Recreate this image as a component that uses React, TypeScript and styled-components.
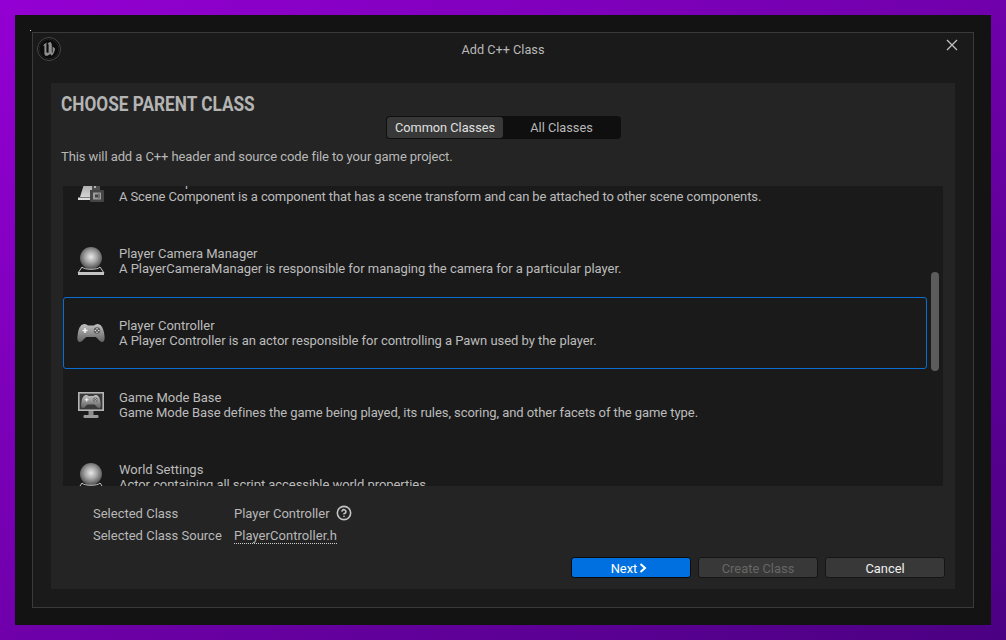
import styled, { createGlobalStyle } from 'styled-components';
import { CircleHelp } from 'lucide-react';

const GlobalStyle = createGlobalStyle`
  html, body {
    margin: 0;
    padding: 0;
    background: #4b0082;
  }
  * {
    box-sizing: border-box;
  }
`;

const Screen = styled.div`
  width: 1006px;
  height: 640px;
  padding: 15px;
  overflow: hidden;
  background: linear-gradient(148deg, #9400d3 0%, #4b0082 100%);
  font-family: Roboto, "Liberation Sans", sans-serif;
  font-size: 13px;
  line-height: 15px;
  color: #c0c0c0;
`;

const Frame = styled.div`
  position: relative;
  width: 976px;
  height: 610px;
  padding: 17px;
  background: #131313;

  &::before {
    content: '';
    position: absolute;
    left: 15px;
    top: 15px;
    width: 1px;
    height: 1px;
    background: #d8d8d8;
  }
`;

const Window = styled.div`
  display: flex;
  flex-direction: column;
  width: 942px;
  height: 576px;
  border: 1px solid #3a3a3a;
  background: #1a1a1a;
`;

const TitleBar = styled.div`
  display: grid;
  grid-template-columns: 1fr auto 1fr;
  align-items: start;
  height: 50px;
  padding: 4px 4px 0;
  flex-shrink: 0;
`;

const TitleText = styled.div`
  margin-top: 5px;
  line-height: 15px;
  font-size: 12.7px;
  color: #b8b8b8;
`;

const CloseButton = styled.div`
  justify-self: end;
  display: flex;
  margin: 2px 11px 0 0;
  color: #c0c0c0;
`;

const Panel = styled.div`
  display: flex;
  flex-direction: column;
  margin: 0 18px;
  height: 506px;
  padding: 0 10px;
  background: #242424;
`;

const Heading = styled.h1`
  margin: 10px 0 0;
  height: 22px;
  font-size: 20.5px;
  line-height: 22px;
  font-weight: 700;
  color: #b4b4b4;
  white-space: nowrap;
  transform: scaleX(0.84);
  transform-origin: left center;
`;

const Tabs = styled.div`
  display: flex;
  align-self: center;
  width: 235px;
  height: 23px;
  margin: 1px 0 0 1px;
  padding: 1px;
  border-radius: 4px;
  background: #0f0f0f;
  font-size: 12.75px;
`;

const Tab = styled.div<{ $active?: boolean }>`
  display: flex;
  align-items: center;
  justify-content: center;
  flex: 0 0 ${(p) => (p.$active ? '116px' : '117px')};
  border-radius: 3px;
  background: ${(p) => (p.$active ? '#383838' : 'transparent')};
  color: ${(p) => (p.$active ? '#e0e0e0' : '#b8b8b8')};
`;

const Description = styled.div`
  margin-top: 10px;
  height: 16px;
  line-height: 16px;
  letter-spacing: -0.085px;
  white-space: nowrap;
  color: #b8b8b8;
`;

const ListBox = styled.div`
  position: relative;
  height: 300px;
  margin: 21px 2px 0;
  overflow: hidden;
  background: #1a1a1a;
`;

const Rows = styled.div`
  margin-top: -33px;
`;

const Row = styled.div<{ $selected?: boolean }>`
  display: flex;
  align-items: center;
  width: 864px;
  height: 72px;
  padding-left: 13px;
  border: 1px solid ${(p) => (p.$selected ? '#0a6ed1' : 'transparent')};
  border-radius: 3px;
`;

const RowIcon = styled.div`
  flex: 0 0 28px;
  height: 32px;
  margin-right: 14px;
`;

const RowText = styled.div`
  white-space: nowrap;
  color: #bcbcbc;
`;

const RowName = styled.div`
  line-height: 15px;
`;

const RowDesc = styled.div<{ $tracking: number }>`
  line-height: 15px;
  letter-spacing: ${(p) => p.$tracking}px;
`;

const ScrollThumb = styled.div`
  position: absolute;
  left: 868px;
  top: 86px;
  width: 8px;
  height: 99px;
  border-radius: 4px;
  background: #5c5c5c;
`;

const Details = styled.div`
  display: grid;
  grid-template-columns: 141px auto;
  grid-auto-rows: 22px;
  align-items: center;
  justify-content: start;
  margin: 16px 0 0 32px;
  color: #b8b8b8;
`;

const ValueCell = styled.div`
  display: flex;
  align-items: center;
  gap: 6px;
`;

const SourceLink = styled.span`
  padding-top: 1px;
  line-height: 15px;
  letter-spacing: 0.05px;
  border-bottom: 1px dotted #d0d0d0;
`;

const ButtonBar = styled.div`
  display: flex;
  justify-content: flex-end;
  gap: 7px;
  margin-top: 11px;
`;

const Button = styled.div<{ $kind?: 'primary' | 'disabled' }>`
  display: flex;
  align-items: center;
  justify-content: center;
  gap: 2px;
  width: 120px;
  height: 21px;
  padding: 1px ${(p) => (p.$kind === 'primary' ? '4px' : '0')} 0 0;
  border: 1px solid ${(p) => (p.$kind === 'primary' ? '#0a0a0a' : '#151515')};
  border-radius: 3px;
  font-size: 12.9px;
  background: ${(p) => (p.$kind === 'primary' ? '#0070e0' : '#383838')};
  color: ${(p) => (p.$kind === 'primary' ? '#ffffff' : p.$kind === 'disabled' ? '#666666' : '#f0f0f0')};
`;

const UnrealLogo = () => (
  <svg width="24" height="24" viewBox="0 0 24 24">
    <circle cx="12" cy="12" r="11.5" fill="#0c0c0c" stroke="#4a4a4a" strokeWidth="1" />
    <circle cx="12" cy="12" r="9.8" fill="none" stroke="#242424" strokeWidth="0.8" />
    <path
      d="M6 9.4 C6.6 7.6 8 6.4 10 5.6 C9.4 6.4 9.4 7 9.4 8 V14.6 C9.4 15.8 10.6 16.2 11.6 15.4 V8 C11.6 7.2 11.2 6.6 10.6 6.2 L13.6 4.8 C13.2 5.6 14.8 6.2 14.8 7.2 V15.2 L15.6 15.8 V9.4 L18 11.4 C18 13.8 17 16 14.8 18.8 L13.2 17 C11.6 18.4 10.4 18.8 9.4 18.8 C8 18.8 7.4 17.6 7.4 16.2 V8.6 C6.8 8.6 6.4 9 6 9.4 Z"
      fill="#8e8e8e"
    />
  </svg>
);

const CloseIcon = () => (
  <svg width="12" height="12" viewBox="0 0 12 12">
    <path d="M1 1 L11 11 M11 1 L1 11" stroke="currentColor" strokeWidth="1.3" fill="none" />
  </svg>
);

const NextChevron = () => (
  <svg width="8" height="10" viewBox="0 0 8 10">
    <path d="M1.5 1 L6 5 L1.5 9" stroke="#fff" strokeWidth="2" fill="none" />
  </svg>
);

const IconDefs = () => (
  <svg width="0" height="0" style={{ position: 'absolute' }}>
    <defs>
      <radialGradient id="sphere" cx="0.5" cy="0.45" r="0.55">
        <stop offset="0" stopColor="#e8e8e8" />
        <stop offset="0.5" stopColor="#a4a4a4" />
        <stop offset="1" stopColor="#505050" />
      </radialGradient>
      <linearGradient id="pad" x1="0" y1="0" x2="0" y2="1">
        <stop offset="0" stopColor="#c0c0c0" />
        <stop offset="1" stopColor="#626262" />
      </linearGradient>
      <linearGradient id="cone" x1="0" y1="0" x2="0" y2="1">
        <stop offset="0" stopColor="#a0a0a0" />
        <stop offset="1" stopColor="#d4d4d4" />
      </linearGradient>
    </defs>
  </svg>
);

const SceneIcon = () => (
  <svg width="28" height="32" viewBox="0 0 28 32">
    <rect x="11" y="8" width="12" height="9" fill="#4e4e4e" />
    <circle cx="18" cy="14" r="1" fill="#d0d0d0" />
    <path d="M3 24 L8 8 H15 L15 17 H13 V24 Z" fill="url(#cone)" />
    <rect x="1" y="24.5" width="13" height="2.5" fill="#dcdcdc" />
    <rect x="13" y="17" width="14" height="12" rx="1" fill="#454545" />
    <rect x="16" y="19.5" width="8" height="7" fill="#9c9c9c" />
    <rect x="18" y="21.5" width="3" height="3" fill="#454545" />
    <rect x="21.5" y="20.5" width="1" height="5" fill="#454545" />
  </svg>
);

const SphereIcon = () => (
  <svg width="28" height="32" viewBox="0 0 28 32">
    <circle cx="14" cy="13" r="11" fill="url(#sphere)" />
    <path d="M5 22 L1 28 H27 L23 22 C21 25 7 25 5 22 Z" fill="none" stroke="#c8c8c8" strokeWidth="1" />
    <rect x="1" y="27" width="26" height="3" fill="#c4c4c4" />
  </svg>
);

const PadShape = ({ scale = 1, dx = 0, dy = 0 }: { scale?: number; dx?: number; dy?: number }) => (
  <g transform={`translate(${dx} ${dy}) scale(${scale})`}>
    <path
      d="M7.5 7 C9 7 10 8 11 8.4 H17 C18 8 19 7 20.5 7 C24 7 26 10.5 27 15.5 C28 21 28 24.6 25.4 25 C22.6 25.4 21 21 18.5 20 H9.5 C7 21 5.4 25.4 2.6 25 C0 24.6 0 21 1 15.5 C2 10.5 4 7 7.5 7 Z"
      fill="url(#pad)"
    />
    <path d="M8 11 V16 M5.5 13.5 H10.5" stroke="#f0f0f0" strokeWidth="1.6" />
    <circle cx="20" cy="13.5" r="3.2" fill="#5a5a5a" />
    <circle cx="20" cy="11.8" r="0.8" fill="#ddd" />
    <circle cx="20" cy="15.2" r="0.8" fill="#ddd" />
    <circle cx="18.3" cy="13.5" r="0.8" fill="#ddd" />
    <circle cx="21.7" cy="13.5" r="0.8" fill="#ddd" />
  </g>
);

const GamepadIcon = () => (
  <svg width="28" height="32" viewBox="0 0 28 32">
    <PadShape />
  </svg>
);

const MonitorIcon = () => (
  <svg width="28" height="32" viewBox="0 0 28 32">
    <rect x="1.8" y="3.8" width="24.4" height="17.4" fill="#3a3a3a" stroke="#b4b4b4" strokeWidth="1.6" />
    <PadShape scale={0.72} dx={3.9} dy={1} />
    <rect x="11.5" y="22" width="5" height="4" fill="#8c8c8c" />
    <rect x="6.5" y="26" width="15" height="3" rx="1" fill="#9a9a9a" />
  </svg>
);

const classes = [
  {
    name: 'Scene Component',
    text: 'A Scene Component is a component that has a scene transform and can be attached to other scene components.',
    icon: <SceneIcon />,
    tracking: -0.115,
  },
  {
    name: 'Player Camera Manager',
    text: 'A PlayerCameraManager is responsible for managing the camera for a particular player.',
    icon: <SphereIcon />,
    tracking: -0.025,
  },
  {
    name: 'Player Controller',
    text: 'A Player Controller is an actor responsible for controlling a Pawn used by the player.',
    icon: <GamepadIcon />,
    tracking: -0.04,
    selected: true,
  },
  {
    name: 'Game Mode Base',
    text: 'Game Mode Base defines the game being played, its rules, scoring, and other facets of the game type.',
    icon: <MonitorIcon />,
    tracking: -0.07,
  },
  {
    name: 'World Settings',
    text: 'Actor containing all script accessible world properties.',
    icon: <SphereIcon />,
    tracking: -0.055,
  },
];

export default function App() {
  return (
    <Screen>
      <GlobalStyle />
      <IconDefs />
      <Frame>
        <Window>
          <TitleBar>
            <UnrealLogo />
            <TitleText>Add C++ Class</TitleText>
            <CloseButton>
              <CloseIcon />
            </CloseButton>
          </TitleBar>
          <Panel>
            <Heading>CHOOSE PARENT CLASS</Heading>
            <Tabs>
              <Tab $active>Common Classes</Tab>
              <Tab>All Classes</Tab>
            </Tabs>
            <Description>This will add a C++ header and source code file to your game project.</Description>
            <ListBox>
              <Rows>
                {classes.map((c) => (
                  <Row key={c.name} $selected={c.selected}>
                    <RowIcon>{c.icon}</RowIcon>
                    <RowText>
                      <RowName>{c.name}</RowName>
                      <RowDesc $tracking={c.tracking}>{c.text}</RowDesc>
                    </RowText>
                  </Row>
                ))}
              </Rows>
              <ScrollThumb />
            </ListBox>
            <Details>
              <div>Selected Class</div>
              <ValueCell>
                Player Controller
                <CircleHelp size={16} color="#c4c4c4" strokeWidth={2.4} />
              </ValueCell>
              <div>Selected Class Source</div>
              <ValueCell>
                <SourceLink>PlayerController.h</SourceLink>
              </ValueCell>
            </Details>
            <ButtonBar>
              <Button $kind="primary">
                Next
                <NextChevron />
              </Button>
              <Button $kind="disabled">Create Class</Button>
              <Button>Cancel</Button>
            </ButtonBar>
          </Panel>
        </Window>
      </Frame>
    </Screen>
  );
}
